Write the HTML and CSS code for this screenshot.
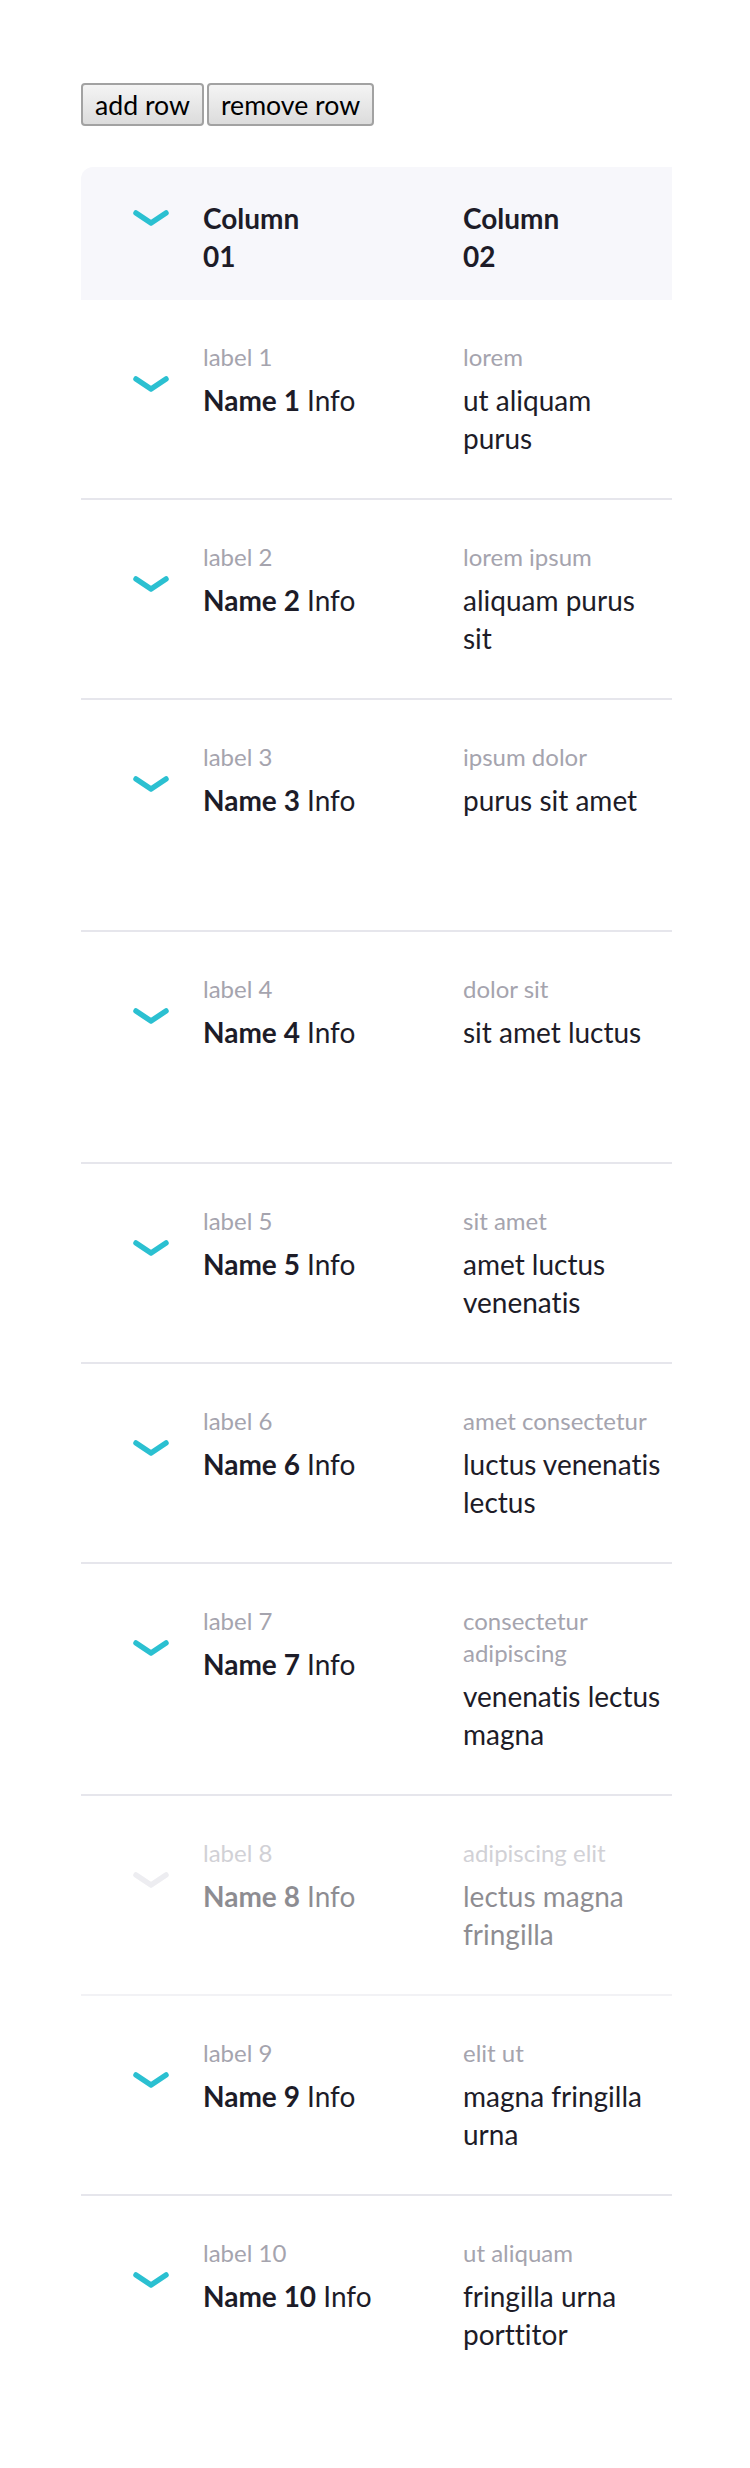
FILE: index.html
```html
<!DOCTYPE html>
<html lang="en">
<head>
<meta charset="utf-8">
<title>Rows</title>
<link rel="stylesheet" href="styles.css">
</head>
<body>
<div class="page">
  <div class="toolbar">
    <button class="btn" type="button">add row</button>
    <button class="btn" type="button">remove row</button>
  </div>
  <div class="table">
    <div class="row head">
      <div class="cell-icon"><svg class="chev" viewBox="0 0 36 16" width="36" height="16"><polyline points="3,3 18,13 33,3"/></svg></div>
      <div class="cell"><div class="head-text">Column<br>01</div></div>
      <div class="cell"><div class="head-text">Column<br>02</div></div>
    </div>

    <div class="row">
      <div class="cell-icon"><svg class="chev" viewBox="0 0 36 16" width="36" height="16"><polyline points="3,3 18,13 33,3"/></svg></div>
      <div class="cell"><div class="label">label 1</div><div class="value"><b>Name 1</b> Info</div></div>
      <div class="cell"><div class="label">lorem</div><div class="value">ut aliquam purus</div></div>
    </div>

    <div class="row">
      <div class="cell-icon"><svg class="chev" viewBox="0 0 36 16" width="36" height="16"><polyline points="3,3 18,13 33,3"/></svg></div>
      <div class="cell"><div class="label">label 2</div><div class="value"><b>Name 2</b> Info</div></div>
      <div class="cell"><div class="label">lorem ipsum</div><div class="value">aliquam purus sit</div></div>
    </div>

    <div class="row tall">
      <div class="cell-icon"><svg class="chev" viewBox="0 0 36 16" width="36" height="16"><polyline points="3,3 18,13 33,3"/></svg></div>
      <div class="cell"><div class="label">label 3</div><div class="value"><b>Name 3</b> Info</div></div>
      <div class="cell"><div class="label">ipsum dolor</div><div class="value">purus sit amet</div></div>
    </div>

    <div class="row tall">
      <div class="cell-icon"><svg class="chev" viewBox="0 0 36 16" width="36" height="16"><polyline points="3,3 18,13 33,3"/></svg></div>
      <div class="cell"><div class="label">label 4</div><div class="value"><b>Name 4</b> Info</div></div>
      <div class="cell"><div class="label">dolor sit</div><div class="value">sit amet luctus</div></div>
    </div>

    <div class="row">
      <div class="cell-icon"><svg class="chev" viewBox="0 0 36 16" width="36" height="16"><polyline points="3,3 18,13 33,3"/></svg></div>
      <div class="cell"><div class="label">label 5</div><div class="value"><b>Name 5</b> Info</div></div>
      <div class="cell"><div class="label">sit amet</div><div class="value">amet luctus venenatis</div></div>
    </div>

    <div class="row">
      <div class="cell-icon"><svg class="chev" viewBox="0 0 36 16" width="36" height="16"><polyline points="3,3 18,13 33,3"/></svg></div>
      <div class="cell"><div class="label">label 6</div><div class="value"><b>Name 6</b> Info</div></div>
      <div class="cell"><div class="label">amet consectetur</div><div class="value">luctus venenatis lectus</div></div>
    </div>

    <div class="row">
      <div class="cell-icon"><svg class="chev" viewBox="0 0 36 16" width="36" height="16"><polyline points="3,3 18,13 33,3"/></svg></div>
      <div class="cell"><div class="label">label 7</div><div class="value"><b>Name 7</b> Info</div></div>
      <div class="cell"><div class="label">consectetur adipiscing</div><div class="value">venenatis lectus magna</div></div>
    </div>

    <div class="row disabled">
      <div class="cell-icon"><svg class="chev" viewBox="0 0 36 16" width="36" height="16"><polyline points="3,3 18,13 33,3"/></svg></div>
      <div class="cell"><div class="label">label 8</div><div class="value"><b>Name 8</b> Info</div></div>
      <div class="cell"><div class="label">adipiscing elit</div><div class="value">lectus magna fringilla</div></div>
    </div>

    <div class="row">
      <div class="cell-icon"><svg class="chev" viewBox="0 0 36 16" width="36" height="16"><polyline points="3,3 18,13 33,3"/></svg></div>
      <div class="cell"><div class="label">label 9</div><div class="value"><b>Name 9</b> Info</div></div>
      <div class="cell"><div class="label">elit ut</div><div class="value">magna fringilla urna</div></div>
    </div>

    <div class="row last">
      <div class="cell-icon"><svg class="chev" viewBox="0 0 36 16" width="36" height="16"><polyline points="3,3 18,13 33,3"/></svg></div>
      <div class="cell"><div class="label">label 10</div><div class="value"><b>Name 10</b> Info</div></div>
      <div class="cell"><div class="label">ut aliquam</div><div class="value">fringilla urna porttitor</div></div>
    </div>
  </div>
</div>
</body>
</html>
```

FILE: styles.css
```css
* { box-sizing: border-box; }

html, body {
  margin: 0;
  padding: 0;
  background: #ffffff;
}

body {
  font-family: Lato, "Open Sans", "Liberation Sans", sans-serif;
  font-variant-ligatures: none;
  color: #1d1c28;
}

.page {
  padding: 83px 78px 72px 81px;
}

.toolbar {
  display: flex;
  gap: 3px;
}

.btn {
  font-family: Lato, "Liberation Sans", sans-serif;
  font-variant-ligatures: none;
  font-size: 26.67px;
  line-height: 38px;
  height: 43px;
  padding: 0 12px;
  color: #000000;
  background: linear-gradient(#f4f4f4, #dcdcdc);
  border: 2px solid #a2a2a2;
  border-radius: 4px;
}

.table {
  margin-top: 41px;
  width: 591px;
  overflow: hidden;
  border-top-left-radius: 12px;
}

.row {
  display: grid;
  grid-template-columns: 122px 260px 209px;
  padding: 41px 0;
  border-bottom: 2px solid #e6e6ec;
}

.row > .cell:last-child {
  padding-right: 7px;
}

.row.tall {
  min-height: 232px;
}

.row.last {
  border-bottom: none;
}

.row.head {
  background: #f7f7fb;
  padding: 32px 0 25px;
  border-bottom: none;
}

.cell-icon {
  padding-left: 52px;
}

.chev {
  display: block;
  margin-top: 35px;
  fill: none;
  stroke: #2bc0d1;
  stroke-width: 5.5;
  stroke-linecap: round;
  stroke-linejoin: round;
}

.head .chev {
  margin-top: 11px;
}

.head-text {
  font-size: 28px;
  line-height: 38px;
  font-weight: 700;
  color: #1d1c28;
}

.label {
  font-size: 24px;
  line-height: 32px;
  color: #a5a4ae;
  margin-bottom: 8px;
}

.value {
  font-size: 28px;
  line-height: 38px;
  color: #1d1c28;
}

.value b {
  font-weight: 700;
}

.row.disabled .cell {
  opacity: 0.5;
}

.row.disabled {
  border-bottom-color: #f2f2f5;
}

.row.disabled .chev {
  stroke: #ededf1;
}
```
